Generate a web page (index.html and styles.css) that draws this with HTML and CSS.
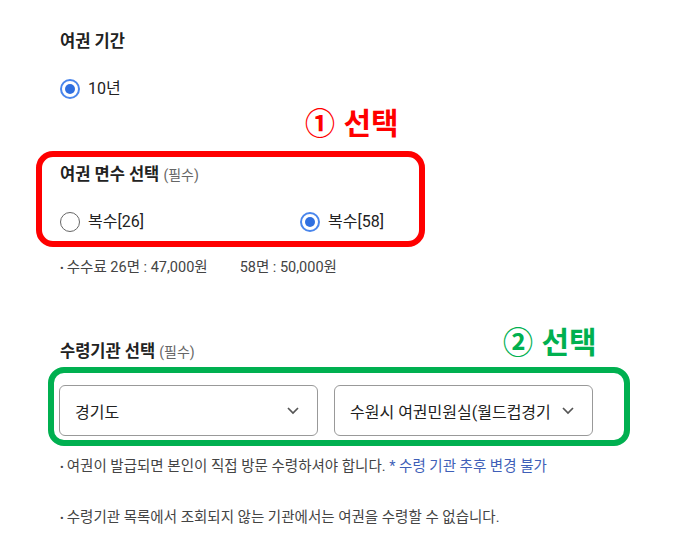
FILE: index.html
```html
<!DOCTYPE html>
<html lang="ko">
<head>
    <meta charset="UTF-8">
    <meta name="viewport" content="width=device-width, initial-scale=1.0">
    <title>여권 신청</title>
    <link rel="stylesheet" href="styles.css">
</head>
<body>
    <main class="form">
        <section class="field period">
            <h3>여권 기간</h3>
            <label class="radio"><span class="dot on"></span>10년</label>
        </section>

        <section class="field pages">
            <span class="note red">① 선택</span>
            <div class="mark red-box">
                <h3>여권 면수 선택 <small>(필수)</small></h3>
                <div class="choices">
                    <label class="radio"><span class="dot"></span>복수[26]</label>
                    <label class="radio"><span class="dot on"></span>복수[58]</label>
                </div>
            </div>
            <p class="tip">수수료 26면 : 47,000원<span class="gap"></span>58면 : 50,000원</p>
        </section>

        <section class="field office">
            <span class="note green">② 선택</span>
            <h3>수령기관 선택 <small>(필수)</small></h3>
            <div class="mark green-box">
                <div class="select">
                    <span>경기도</span>
                    <svg width="12" height="8" viewBox="0 0 12 8"><path d="M1 1l5 5 5-5" fill="none" stroke="#555" stroke-width="1.7"/></svg>
                </div>
                <div class="select">
                    <span>수원시 여권민원실(월드컵경기</span>
                    <svg width="12" height="8" viewBox="0 0 12 8"><path d="M1 1l5 5 5-5" fill="none" stroke="#555" stroke-width="1.7"/></svg>
                </div>
            </div>
            <p class="tip">여권이 발급되면 본인이 직접 방문 수령하셔야 합니다. <span class="blue">* 수령 기관 추후 변경 불가</span></p>
            <p class="tip last">수령기관 목록에서 조회되지 않는 기관에서는 여권을 수령할 수 없습니다.</p>
        </section>
    </main>
</body>
</html>
```

FILE: styles.css
```css
body {
    margin: 0;
    padding: 0;
    background: #fff;
    font-family: Roboto, "Noto Sans CJK KR", sans-serif;
    color: #222;
}

.form {
    padding: 30px 0 0 60px;
    width: 580px;
}

h3 {
    margin: 0;
    font-size: 16.5px;
    line-height: 24px;
    font-weight: 700;
    color: #222;
}

h3 small {
    font-size: 14px;
    font-weight: 400;
    color: #666;
}

.field {
    position: relative;
}

.period .radio {
    margin-top: 23px;
}

.radio {
    display: flex;
    align-items: center;
    gap: 8px;
    font-size: 16px;
    line-height: 24px;
    color: #222;
}

.dot {
    width: 20px;
    height: 20px;
    border: 1.5px solid #666;
    border-radius: 50%;
    box-sizing: border-box;
    display: flex;
    align-items: center;
    justify-content: center;
}

.dot.on {
    border: 2px solid #4a86ec;
}

.dot.on::after {
    content: "";
    width: 10px;
    height: 10px;
    border-radius: 50%;
    background: #2f6fe0;
}

.note {
    position: absolute;
    font-family: "Noto Sans CJK KR", sans-serif;
    font-size: 30px;
    line-height: 34px;
    font-weight: 700;
}

.note.red {
    color: #f00;
    left: 245px;
    top: 3px;
}

.note.green {
    color: #00b050;
    left: 443px;
    top: 43px;
}

.mark {
    border: 6px solid;
    border-radius: 17px;
}

.pages {
    padding-top: 50px;
}

.red-box {
    border-color: #f00;
    margin-left: -24px;
    width: 359px;
    height: 78px;
    padding: 6px 0 0 18px;
    box-sizing: content-box;
}

.choices {
    display: flex;
    margin-top: 23px;
}

.choices .radio:first-child {
    width: 240px;
}

.tip {
    margin: 0;
    font-size: 14.5px;
    line-height: 22px;
    color: #444;
}

.tip::before {
    content: "•";
    font-size: 11px;
    margin-right: 3px;
}

.pages .tip {
    margin-top: 10px;
}

.gap {
    display: inline-block;
    width: 32px;
}

.office {
    padding-top: 60px;
}

.green-box {
    border-color: #00b050;
    margin: 3px 0 0 -12px;
    width: 565px;
    padding: 12px 0 4px 5px;
    display: flex;
    gap: 16px;
    border-radius: 16px;
}

.select {
    width: 259px;
    height: 51px;
    border: 1px solid #999;
    border-radius: 6px;
    box-sizing: border-box;
    display: flex;
    align-items: center;
    justify-content: space-between;
    padding: 0 18px 0 15px;
    font-size: 16px;
    color: #222;
}

.office .tip {
    margin-top: 10px;
}

.office .tip.last {
    margin-top: 28px;
}

.blue {
    color: #3f5fb8;
}
```
